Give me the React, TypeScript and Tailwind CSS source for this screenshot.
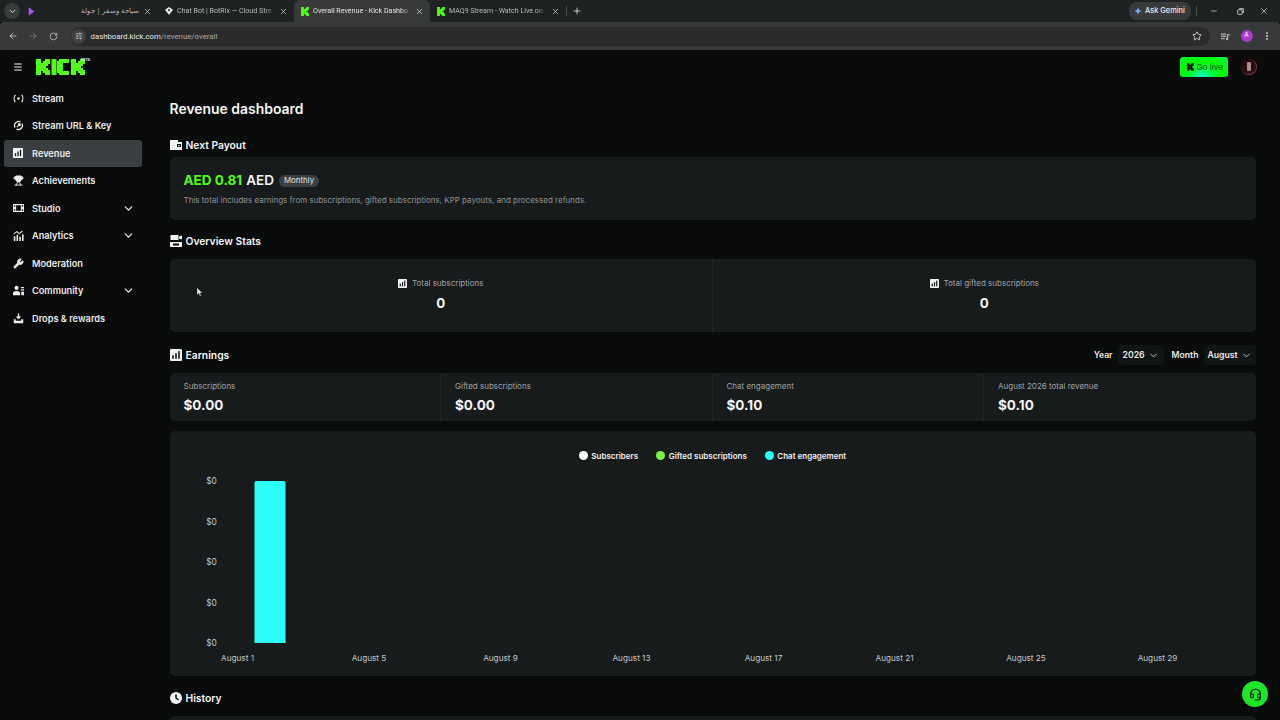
import React from "react";
import { ChevronDown, ArrowLeft, ArrowRight, RotateCw, Star, EllipsisVertical, X, Plus, Minus, Menu, SlidersHorizontal, Headset, Wrench, Trophy } from "lucide-react";

const KPath = "M0 0h5v4h2V2h2V0h5v5h-2v2h-2v2h2v2h2v5H9v-2H7v-2H5v4H0z";

function KFav({ cls }: { cls: string }) {
  return (
    <svg viewBox="0 0 14 16" className={cls}>
      <path d={KPath} fill="#53fc18" />
    </svg>
  );
}

function Tab({ icon, text, active, arabic }: { icon: React.ReactNode; text: string; active?: boolean; arabic?: boolean }) {
  return (
    <div className={`w-[136px] h-[22px] shrink-0 flex items-center pl-[5px] pr-[5px] ${active ? "bg-[#38393a] rounded-t-[6px]" : ""}`}>
      <div className="w-[10px] ml-[1px] flex justify-center shrink-0">{icon}</div>
      <div className={`ml-[3px] w-[98px] overflow-hidden whitespace-nowrap ${active ? "text-[#e2e3e4]" : "text-[#b5b7b8]"} ${arabic ? "text-[7px] text-right font-['Noto_Sans',sans-serif] pl-[6px]" : "text-[7.1px] font-['Roboto',sans-serif] [mask-image:linear-gradient(to_right,black_90%,transparent)]"}`} dir={arabic ? "rtl" : "ltr"}>
        {text}
      </div>
      <X className="ml-auto mr-[1px] w-[9px] h-[9px] text-[#d5d6d7]" strokeWidth={2} />
    </div>
  );
}

function Sep() {
  return <div className="w-px h-[10px] bg-[#4a4c4d]" />;
}

function BarsIcon({ cls = "w-[10px] h-[10px]" }: { cls?: string }) {
  return (
    <svg viewBox="0 0 12 12" className={cls}>
      <rect x="0" y="0" width="12" height="12" rx="1" fill="#f2f2f2" />
      <rect x="2.2" y="6.2" width="1.6" height="3.6" fill="#15181a" />
      <rect x="5.2" y="4.2" width="1.6" height="5.6" fill="#15181a" />
      <rect x="8.2" y="2.2" width="1.6" height="7.6" fill="#15181a" />
    </svg>
  );
}

const I = "w-[11px] h-[11px] text-[#eeeeee]";

const icons: Record<string, React.ReactNode> = {
  stream: (
    <svg viewBox="0 0 14 14" className={I} fill="none" stroke="currentColor" strokeWidth="1.5">
      <path d="M3 2.5C1 5 1 9 3 11.5M11 2.5c2 2.5 2 6.5 0 9" />
      <circle cx="7" cy="7" r="1.6" fill="currentColor" stroke="none" />
    </svg>
  ),
  url: (
    <svg viewBox="0 0 14 14" className={I} fill="none" stroke="currentColor" strokeWidth="1.6">
      <path d="M2.6 9.5A5.2 5.2 0 0 1 9.5 2.4M11.4 4.5a5.2 5.2 0 0 1-6.9 7.1" />
      <path d="M5 9l4-4M6 5h3v3" />
    </svg>
  ),
  revenue: <BarsIcon cls="w-[10px] h-[10px]" />,
  trophy: <Trophy className={I} fill="currentColor" strokeWidth={2} />,
  studio: (
    <svg viewBox="0 0 14 12" className="w-[11px] h-[10px]">
      <path fillRule="evenodd" fill="#eee" d="M0 1h14v10H0zM4 2.5h6v7H4zM1.2 2.5h1.6v2H1.2zM1.2 7.5h1.6v2H1.2zM11.2 2.5h1.6v2h-1.6zM11.2 7.5h1.6v2h-1.6z" />
    </svg>
  ),
  analytics: (
    <svg viewBox="0 0 14 14" className={I} fill="#eee">
      <rect x="1" y="8" width="2" height="6" />
      <rect x="4.5" y="6" width="2" height="8" />
      <rect x="8" y="8.5" width="2" height="5.5" />
      <rect x="11.5" y="5.5" width="2" height="8.5" />
      <path d="M1 5l4-3 3 2.5L12 1" fill="none" stroke="#eee" strokeWidth="1.3" />
    </svg>
  ),
  moderation: <Wrench className={I} fill="currentColor" strokeWidth={2} />,
  community: (
    <svg viewBox="0 0 14 13" className={I} fill="#eee">
      <circle cx="4.5" cy="3.2" r="2.6" />
      <path d="M0 12.5V9.8C0 8 2 7 4.5 7S9 8 9 9.8v2.7z" />
      <rect x="10" y="2" width="4" height="1.6" />
      <rect x="10" y="5" width="4" height="1.6" />
      <rect x="10.5" y="8" width="3.5" height="4.5" />
    </svg>
  ),
  drops: (
    <svg viewBox="0 0 14 14" className={I} fill="none" stroke="#eee" strokeWidth="1.7">
      <path d="M7 0.5v6M4.6 4.4L7 6.8l2.4-2.4" />
      <path d="M1 8v5h12V8h-2.5v2h-7V8z" fill="#eee" stroke="none" />
    </svg>
  ),
};

const nav = [
  { k: "stream", t: "Stream" },
  { k: "url", t: "Stream URL & Key" },
  { k: "revenue", t: "Revenue", active: true },
  { k: "trophy", t: "Achievements" },
  { k: "studio", t: "Studio", chev: true },
  { k: "analytics", t: "Analytics", chev: true },
  { k: "moderation", t: "Moderation" },
  { k: "community", t: "Community", chev: true },
  { k: "drops", t: "Drops & rewards" },
];

function Heading({ icon, text, cls = "" }: { icon: React.ReactNode; text: string; cls?: string }) {
  return (
    <div className={`flex items-center h-[16px] ${cls}`}>
      <div className="w-[12px] flex justify-center">{icon}</div>
      <span className="ml-[4px] pt-[1px] text-[10.3px] font-semibold text-[#f4f4f4]">{text}</span>
    </div>
  );
}

function Stat({ label }: { label: string }) {
  return (
    <div className="flex-1 flex flex-col items-center pt-[18px] border-r border-[#202526] last:border-r-0">
      <div className="flex items-center h-[12px]">
        <BarsIcon cls="w-[9px] h-[9px]" />
        <span className="ml-[5px] text-[8px] text-[#9ea3a5]">{label}</span>
      </div>
      <div className="mt-[6px] text-[13.33px] font-bold text-[#f4f4f4] leading-[16px]">0</div>
    </div>
  );
}

function Earn({ label, value }: { label: string; value: string }) {
  return (
    <div className="w-1/4 pl-[14px] pt-[7px] border-r border-[#202526] last:border-r-0">
      <div className="text-[8px] leading-[12px] text-[#9ea3a5] whitespace-nowrap">{label}</div>
      <div className="mt-[4px] text-[13.5px] leading-[18px] font-bold text-[#f4f4f4]">{value}</div>
    </div>
  );
}

function Select({ text, cls }: { text: string; cls: string }) {
  return (
    <div className={`h-[20px] bg-[#121516] rounded-[3px] flex items-center justify-center gap-[3px] text-[8.67px] font-semibold text-[#e8e8e8] ${cls}`}>
      {text}
      <ChevronDown className="w-[11px] h-[11px]" strokeWidth={1.7} />
    </div>
  );
}

function Legend({ color, text }: { color: string; text: string }) {
  return (
    <div className="flex items-center gap-[3.5px]">
      <span className="w-[9px] h-[9px] rounded-full" style={{ background: color }} />
      <span className="text-[8px] font-semibold text-[#f0f0f0]">{text}</span>
    </div>
  );
}

function Chart() {
  const ys = [481, 521.5, 562, 602.5, 643];
  const xs = [
    [237, "August 1"],
    [368.5, "August 5"],
    [500, "August 9"],
    [631, "August 13"],
    [763, "August 17"],
    [894, "August 21"],
    [1025.5, "August 25"],
    [1157, "August 29"],
  ] as const;
  return (
    <svg viewBox="169.5 465 1086 211" className="w-[1086px] h-[211px] block">
      {ys.map((y) => (
        <text key={y} x="211" y={y + 3} textAnchor="middle" fontSize="8.4" fill="#c4c7c8" fontFamily="Inter, sans-serif">$0</text>
      ))}
      <path d="M254 483a2 2 0 0 1 2-2h27a2 2 0 0 1 2 2v160h-31z" fill="#2bfdf9" />
      {xs.map(([x, t]) => (
        <text key={t} x={x} y={661} textAnchor="middle" fontSize="8.2" fill="#c4c7c8" fontFamily="Inter, sans-serif">{t}</text>
      ))}
    </svg>
  );
}

export default function App() {
  return (
    <div className="relative w-[1280px] h-[720px] overflow-hidden bg-[#0a0b0b] font-['Inter',sans-serif] flex flex-col">
      {/* Tab strip */}
      <div className="h-[22px] bg-[#1f2223] flex items-center shrink-0">
        <div className="ml-[4px] w-[16px] h-[16px] rounded-full bg-[#393b3c] flex items-center justify-center shrink-0">
          <ChevronDown className="w-[9px] h-[9px] text-[#e5e5e5]" strokeWidth={2.5} />
        </div>
        <div className="ml-[2px] flex items-center">
          <Tab arabic text="سياحة وسفر | جولة" icon={<svg viewBox="0 0 10 12" className="w-[7px] h-[9px] -ml-[3px]"><path d="M1 0l8 6-8 6z" fill="#a855f7" /></svg>} />
          <Tab text="Chat Bot | BotRix — Cloud Stre" icon={<svg viewBox="0 0 12 12" className="w-[8px] h-[8px]"><path d="M6 0l6 4-6 8-6-8z" fill="#e8e8e8" /><circle cx="6" cy="4.500" r="1.500" fill="#1f2223" /></svg>} />
          <Tab active text="Overall Revenue - Kick Dashbo" icon={<KFav cls="w-[8px] h-[9px]" />} />
          <Tab text="MAQ9 Stream - Watch Live on" icon={<KFav cls="w-[8px] h-[9px]" />} />
        </div>
        <div className="-ml-[0px]"><Sep /></div>
        <Plus className="ml-[5px] w-[10px] h-[10px] text-[#e2e3e4]" strokeWidth={2} />
        <div className="ml-auto h-[18px] w-[62px] rounded-[8px] bg-[#383a3b] flex items-center pl-[5px] mr-[5px]">
          <svg viewBox="0 0 10 10" className="w-[8px] h-[8px]"><path d="M5 0c.5 3 2 4.500 5 5-3 .5-4.500 2-5 5-.5-3-2-4.500-5-5 3-.5 4.500-2 5-5z" fill="#6ea8ea" /></svg>
          <span className="ml-[3px] text-[7.4px] font-medium text-[#ececec] whitespace-nowrap">Ask Gemini</span>
        </div>
        <Sep />
        <Minus className="ml-[13px] w-[8px] h-[8px] text-[#e2e3e4]" />
        <svg viewBox="0 0 10 10" className="ml-[19px] w-[7px] h-[7px]" fill="none" stroke="#e2e3e4" strokeWidth="1.200"><rect x="1" y="2.500" width="6.500" height="6.500" rx="1" /><path d="M3 1h6v6" /></svg>
        <X className="ml-[15px] mr-[11px] w-[10px] h-[10px] text-[#e2e3e4]" strokeWidth={1.6} />
      </div>

      {/* Toolbar */}
      <div className="h-[28px] bg-[#38393a] rounded-t-[4px] flex items-center shrink-0">
        <ArrowLeft className="ml-[8px] w-[10px] h-[10px] text-[#c9cacb]" strokeWidth={2} />
        <ArrowRight className="ml-[10px] w-[10px] h-[10px] text-[#77797a]" strokeWidth={2} />
        <RotateCw className="ml-[11px] w-[9px] h-[9px] text-[#c9cacb]" strokeWidth={2} />
        <div className="ml-[11.500px] w-[1140px] h-[19px] rounded-full bg-[#2a2b2c] flex items-center shrink-0">
          <div className="ml-[1.500px] w-[15px] h-[15px] rounded-full bg-[#3f4041] flex items-center justify-center">
            <SlidersHorizontal className="w-[8px] h-[8px] text-[#dcdcdc]" strokeWidth={2} />
          </div>
          <span className="ml-[4.500px] pt-[1px] text-[7.8px] font-['Roboto',sans-serif] text-[#e3e4e5]">dashboard.kick.com<span className="text-[#a9abac]">/revenue/overall</span></span>
          <Star className="ml-auto mr-[8px] w-[10px] h-[10px] text-[#e3e4e5]" strokeWidth={2} />
        </div>
        <svg viewBox="0 0 12 12" className="ml-[11.500px] w-[9px] h-[9px]" fill="#b5b7b8"><rect x="0" y="2" width="7" height="1.600" /><rect x="0" y="5" width="7" height="1.600" /><rect x="0" y="8" width="5" height="1.600" /><path d="M8 3h3.500v1.500H9.500v5a1.500 1.500 0 1 1-1.500-1.500z" /></svg>
        <div className="ml-[10.500px] w-[12px] h-[12px] rounded-full bg-[#a63cc9] flex items-center justify-center text-[6.5px] text-white">A</div>
        <EllipsisVertical className="ml-[9px] w-[10px] h-[10px] text-[#dfe0e1]" strokeWidth={2.5} />
      </div>

      {/* Dashboard header */}
      <div className="h-[34.5px] flex items-center shrink-0">
        <Menu className="ml-[13px] w-[10px] h-[10px] text-[#f2f2f2]" strokeWidth={2.5} />
        <div className="ml-[13px] relative flex">
          <svg viewBox="0 0 50 16" className="w-[50px] h-[16px]">
            <g fill="#53fc18">
              <path d={KPath} />
              <rect x="15.500" y="0" width="5" height="16" />
              <path d="M23.500 0h10v4h-6v8h6v4h-10v-2h-2V2h2z" transform="translate(-0.500 0)" />
              <path d={KPath} transform="translate(35 0)" />
            </g>
          </svg>
          <span className="-ml-[5px] -mt-[1px] text-[3.500px] leading-[5px] font-bold text-[#e5e5e5]">BETA</span>
        </div>
        <div className="ml-auto w-[48px] h-[20px] rounded-[3px] flex items-center justify-center pl-[2px] bg-[radial-gradient(ellipse_at_46%_100%,#1af5e0_0%,#05f83a_30%,#00fb00_60%,#08f54a_100%)]">
          <svg viewBox="0 0 14 16" className="w-[7px] h-[8px]"><path d={KPath} fill="#06240a" /></svg>
          <span className="ml-[2.500px] text-[8.2px] text-[#0b4a14]">Go live</span>
        </div>
        <div className="ml-[13px] mr-[23px] w-[16px] h-[16px] rounded-full bg-[#2a0c10] border-b border-r border-[#7d3a42] flex items-center justify-center">
          <span className="w-[4px] h-[9px] rounded-[1px] bg-[#a98d8a]" />
        </div>
      </div>

      <div className="flex-1 flex min-h-0">
        {/* Sidebar */}
        <div className="w-[146px] px-[4px] shrink-0">
          {nav.map((n) => (
            <div key={n.t} className={`h-[27.5px] rounded-[3px] flex items-center ${n.active ? "bg-[#3a3f42]" : ""}`}>
              <div className="w-[28px] flex justify-center shrink-0">{icons[n.k]}</div>
              <span className="pt-[1px] text-[9.2px] font-semibold text-[#e9eaea] whitespace-nowrap">{n.t}</span>
              {n.chev && <ChevronDown className="ml-auto mr-[7.500px] w-[13px] h-[13px] text-[#eeeeee]" strokeWidth={2.2} />}
            </div>
          ))}
        </div>

        {/* Main */}
        <div className="ml-[23.500px] w-[1086px] pt-[13.500px] shrink-0">
          <h1 className="h-[20px] pt-[1px] leading-[20px] text-[13.950px] font-semibold text-[#f5f5f5]">Revenue dashboard</h1>

          <Heading
            cls="mt-[19px]"
            text="Next Payout"
            icon={
              <svg viewBox="0 0 12 10" className="w-[12px] h-[10px]"><path fillRule="evenodd" fill="#f2f2f2" d="M0 0h8v2h4v8H0zM7 4v3h4V4z" /><rect x="8.200" y="5" width="1.500" height="1.200" fill="#f2f2f2" /></svg>
            }
          />
          <div className="mt-[4px] h-[63px] rounded-[5px] bg-[#171b1c] pl-[14px] pt-[14px]">
            <div className="flex items-center h-[19px]">
              <span className="text-[13.500px] font-bold text-[#53fc18]">AED 0.81</span>
              <span className="ml-[4px] text-[13.500px] font-semibold text-[#f4f4f4]">AED</span>
              <span className="ml-[5px] h-[12px] px-[5px] rounded-full bg-[#3a3f41] flex items-center text-[7.9px] text-[#e0e0e0]">Monthly</span>
            </div>
            <div className="mt-[4px] text-[8px] leading-[12px] text-[#8d9294]">This total includes earnings from subscriptions, gifted subscriptions, KPP payouts, and processed refunds.</div>
          </div>

          <Heading
            cls="mt-[13px]"
            text="Overview Stats"
            icon={
              <svg viewBox="0 0 12 12" className="w-[12px] h-[12px]" fill="#f2f2f2"><rect x="0.500" y="0" width="8" height="5" /><path d="M9 1.500l3-1v4l-3-1z" /><path fillRule="evenodd" d="M0 7h12v5H0zM3 8.500v2h6v-2z" /></svg>
            }
          />
          <div className="mt-[10px] h-[73px] rounded-[5px] bg-[#171b1c] flex">
            <Stat label="Total subscriptions" />
            <Stat label="Total gifted subscriptions" />
          </div>

          <div className="mt-[13px] h-[20px] flex items-center">
            <Heading text="Earnings" icon={<BarsIcon cls="w-[12px] h-[12px]" />} />
            <div className="ml-auto flex items-center">
              <span className="text-[8.67px] font-semibold text-[#e8e8e8]">Year</span>
              <Select text="2026" cls="ml-[5px] w-[46px]" />
              <span className="ml-[8px] text-[8.67px] font-semibold text-[#e8e8e8]">Month</span>
              <Select text="August" cls="ml-[5px] w-[52px]" />
            </div>
          </div>
          <div className="mt-[8px] h-[48px] rounded-[5px] bg-[#171b1c] flex">
            <Earn label="Subscriptions" value="$0.00" />
            <Earn label="Gifted subscriptions" value="$0.00" />
            <Earn label="Chat engagement" value="$0.10" />
            <Earn label="August 2026 total revenue" value="$0.10" />
          </div>

          <div className="mt-[10px] h-[245px] rounded-[5px] bg-[#171b1c]">
            <div className="pt-[15px] h-[34px] flex justify-center gap-[18px]">
              <Legend color="#ffffff" text="Subscribers" />
              <Legend color="#7cf23f" text="Gifted subscriptions" />
              <Legend color="#2bfdf9" text="Chat engagement" />
            </div>
            <Chart />
          </div>

          <Heading
            cls="mt-[14px]"
            text="History"
            icon={
              <svg viewBox="0 0 12 12" className="w-[12px] h-[12px]"><circle cx="6" cy="6" r="6" fill="#f2f2f2" /><path d="M6 2.500V6l2.500 2" fill="none" stroke="#0a0b0b" strokeWidth="1.500" /></svg>
            }
          />
          <div className="mt-[10px] h-[60px] rounded-[5px] bg-[#171b1c]" />
        </div>
      </div>

      {/* Mouse pointer */}
      <svg viewBox="0 0 10 14" className="absolute left-[197px] top-[287px] w-[6px] h-[10px]">
        <path d="M0 0v12l3-3 2 5 2-1-2-4.500h4z" fill="#e8e8e8" stroke="#111" strokeWidth="0.500" />
      </svg>

      {/* Support bubble */}
      <div className="absolute left-[1242px] top-[681px] w-[26px] h-[26px] rounded-full bg-[#1fe52a] flex items-center justify-center">
        <Headset className="w-[13px] h-[13px] text-[#07300a]" strokeWidth={2.2} />
      </div>
    </div>
  );
}
